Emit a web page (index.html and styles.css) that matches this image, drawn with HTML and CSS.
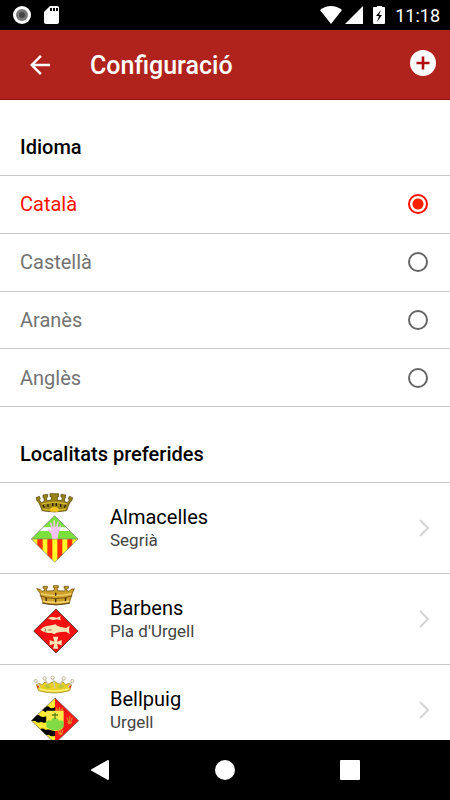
FILE: index.html
```html
<!DOCTYPE html>
<html lang="ca">
<head>
    <meta charset="UTF-8">
    <meta name="viewport" content="width=device-width, initial-scale=1.0">
    <title>Configuració</title>
    <link rel="stylesheet" href="styles.css">
</head>
<body>
    <div class="status-bar">
        <svg width="20" height="20" viewBox="0 0 20 20">
            <circle cx="10" cy="10" r="9" fill="#fff"/>
            <circle cx="10" cy="10" r="6" fill="#777"/>
            <circle cx="10" cy="10" r="3" fill="#444"/>
        </svg>
        <svg width="20" height="20" viewBox="0 0 20 20">
            <path fill="#fff" d="M8 1h7q2 0 2 2v14q0 2-2 2H4q-2 0-2-2V7z"/>
            <path fill="#000" d="M8 3h2v3H8zM11 3h2v3h-2zM14 3h2v3h-2z"/>
        </svg>
        <div class="status-right">
            <svg width="22" height="20" viewBox="0 0 22 20">
                <path fill="#fff" d="M11 19 0 5Q5 1 11 1t11 4z"/>
            </svg>
            <svg width="19" height="20" viewBox="0 0 19 20">
                <path fill="#fff" d="M19 1v18H1z"/>
            </svg>
            <svg class="battery" width="12" height="20" viewBox="0 0 12 20">
                <path fill="#fff" d="M0 3q0-1 1-1h3V1h5v1h2q1 0 1 1v15q0 1-1 1H1q-1 0-1-1z"/>
                <path fill="#000" d="M8 5 3 11h3l-2 6 5-7H6z"/>
            </svg>
            <span class="time">11:18</span>
        </div>
    </div>

    <header class="app-bar">
        <button type="button" class="icon-btn" aria-label="Enrere">
            <svg width="30" height="30" viewBox="0 0 24 24">
                <path fill="#fff" d="M20 11H7.83l5.59-5.59L12 4l-8 8 8 8 1.41-1.41L7.83 13H20z"/>
            </svg>
        </button>
        <h1>Configuració</h1>
        <button type="button" class="icon-btn add-btn" aria-label="Afegeix">
            <svg width="26" height="26" viewBox="0 0 26 26">
                <circle cx="13" cy="13" r="13" fill="#fff"/>
                <path stroke="#b00d0d" stroke-width="2.6" d="M13 6.5v13M6.5 13h13"/>
            </svg>
        </button>
    </header>

    <main>
        <h2 id="idioma">Idioma</h2>
        <div class="options" role="radiogroup" aria-labelledby="idioma">
            <label class="option">Català<input type="radio" name="lang" checked></label>
            <label class="option">Castellà<input type="radio" name="lang"></label>
            <label class="option">Aranès<input type="radio" name="lang"></label>
            <label class="option">Anglès<input type="radio" name="lang"></label>
        </div>

        <h2>Localitats preferides</h2>
        <a class="town" href="#almacelles">
            <svg class="crest" viewBox="0 2 210 255">
                <path fill="#9a8418" stroke="#4a3d05" stroke-width="2" d="M48 37L58 33L61 41L58 44L64 52L73 48L72 38L69 37V29L83 27V35L79 37L81 46L94 44V34H90V25H116V34H112V44L125 46L127 37L123 35V27L137 29V37L134 38L133 48L142 52L148 44L145 41L148 33L158 37L155 47L151 49L145 62L140 76Q103 84 66 76L61 62L55 49L51 47z"/>
                <path fill="none" stroke="#d5b92c" stroke-width="4" d="M66 56q37-10 74 0M68 71q35 8 70 0"/>
                <path fill="#f5c51c" d="M91 68l12-4 12 4v11H91z"/>
                <path stroke="#2c2400" stroke-width="4" d="M69 58l4 9M84 56v9M98 53v9M109 53v9M122 56v9M137 58l-4 9"/>
                <path fill="#7be03c" d="M104 91l70 70H34z"/>
                <path fill="#fff" d="M70 126h68l11 11H59z"/>
                <path fill="#ffff2a" d="M34 161h140l-70 70z"/>
                <path fill="#ff3000" d="M52 161h16v34l-16-16zM82 161h15v63l-15-15zM112 161h15v47l-15 15zM142 161h15v17l-15 15z"/>
                <path fill="none" stroke="#777" stroke-width="2" d="M104 91l70 70-70 70-70-70zM34 161h140"/>
                <path fill="#f5c3f3" d="M96 160l-2-14-11-13q-1-5 4-2l8 6-5-23q1-5 4-2l6 19V106q2-4 5 0l1 25 6-22q4-3 4 1l-3 24 6-12q4-3 4 1l-7 20-4 17z"/>
            </svg>
            <span class="town-text">
                <span class="town-name">Almacelles</span>
                <span class="town-area">Segrià</span>
            </span>
            <svg class="chevron" viewBox="0 0 12 18"><path d="M2 1l8 8-8 8"/></svg>
        </a>
        <a class="town" href="#barbens">
            <svg class="crest" viewBox="0 4 210 255">
                <path fill="#d0a02c" stroke="#5b3c00" stroke-width="2" d="M50 39l10 2 6 6 9-3-2-6h-4v-6h13v6h-4l2 8 22-1 2-9h-4v-6h15v6h-4l2 9 21 1 2-8h-4v-6h13v6h-4l-2 6 8 3 6-6 10-2-6 13-9 30q-39 11-79 0l-9-30z"/>
                <path fill="none" stroke="#efd46c" stroke-width="4" d="M62 54q46 12 92 0M68 76q40 9 80 0"/>
                <path fill="none" stroke="#4d3200" stroke-width="2" d="M59 61q49 15 98 0M66 83q42 9 84 0"/>
                <path fill="none" stroke="#3d2600" stroke-width="4" d="M107 51v9M107 70v10M78 66l1 10M137 66l-1 10"/>
                <path fill="#f80f12" stroke="#222" stroke-width="2" d="M108 100l66 66-66 66-67-66z"/>
                <path fill="#f5e6b7" d="M84 128q10-7 26-2l13-4-3 6 3 6-13-3q-14 5-26-3z"/>
                <path fill="#f5e6b7" d="M61 162q12-12 34-13l12-3 5 5q15 5 26 6l11-7-2 12 2 13-11-7q-18 0-28 3l-8 5-7-4q-22 0-34-10z"/>
                <path fill="none" stroke="#7a3020" stroke-width="2" d="M75 158q4 5 0 10M85 163h10"/>
                <path fill="#f5e6b7" d="M99 183h16l-4 15 14-5v16l-14-5 4 15H99l4-15-14 5v-16l14 5z"/>
            </svg>
            <span class="town-text">
                <span class="town-name">Barbens</span>
                <span class="town-area">Pla d'Urgell</span>
            </span>
            <svg class="chevron" viewBox="0 0 12 18"><path d="M2 1l8 8-8 8"/></svg>
        </a>
        <a class="town" href="#bellpuig">
            <svg class="crest" viewBox="0 7 210 255">
                <path fill="#e8cf22" stroke="#98862a" stroke-width="2" d="M49 57l8-4 10 4 8-8 12 6 15-9 15 9 12-6 8 8 10-4 8 4-6 18q-46 14-94 0z"/>
                <path fill="#b9c63a" d="M72 60l12-4 8 10-10 3zM112 66l10-10 12 4-9 8z"/>
                <path fill="none" stroke="#fff37c" stroke-width="5" d="M58 70q44 12 88 0"/>
                <path fill="none" stroke="#cfc9b8" stroke-width="4" d="M50 49l11 17M76 42l8 14M99 40l6 28M129 42l-8 14M155 49l-11 17"/>
                <g fill="#f5f1dc" stroke="#a9a48f" stroke-width="2">
                    <circle cx="47" cy="46" r="5"/>
                    <circle cx="74" cy="38" r="5"/>
                    <circle cx="98" cy="36" r="5"/>
                    <circle cx="131" cy="38" r="5"/>
                    <circle cx="157" cy="46" r="5"/>
                </g>
                <path fill="#e22" d="M51 60h5v6h-5zM148 60h5v6h-5z"/>
                <path fill="#ffec32" d="M105 97v136l-71-68z"/>
                <path fill="#ff1717" d="M105 97l71 68-71 68z"/>
                <path fill="#000" d="M78 123q7-3 10 2 8 6 17-1v15q-9 5-17-1-10 5-17-2l-5-2zM48 150q8-5 13 2 10 4 19-1v18q-8 5-17-1-10 6-17-2l-12-1zM60 190q10-4 17 3 13-6 28 3v14q-12 5-18-3l-9 1z"/>
                <path fill="#ffe94a" d="M79 135h52v32l-4 24q-21 10-42 0l-6-24z"/>
                <path fill="#81db45" d="M79 169q7-8 14-3 2-10 12-9 10-1 12 9 8-5 14 3v16q-26 18-52 0z"/>
                <path fill="none" stroke="#58851b" stroke-width="4" d="M105 141v19M96 148h18"/>
                <path fill="none" stroke="#d99a28" stroke-width="3" d="M110 126v7M118 124v9M126 126v7M107 133h22M141 155l5 14M149 151v19M157 155l-5 14M142 170h14M144 174h10M114 193l5 13M121 189v19M129 193l-5 13M115 205h13"/>
                <path fill="none" stroke="#555" stroke-width="2" d="M105 97l71 68-71 68-71-68z"/>
            </svg>
            <span class="town-text">
                <span class="town-name">Bellpuig</span>
                <span class="town-area">Urgell</span>
            </span>
            <svg class="chevron" viewBox="0 0 12 18"><path d="M2 1l8 8-8 8"/></svg>
        </a>
    </main>

    <nav class="nav-bar">
        <button type="button" class="icon-btn" aria-label="Torna">
            <svg width="20" height="20" viewBox="0 0 20 20"><path fill="#fff" stroke="#fff" stroke-width="2" stroke-linejoin="round" d="M18 1v18L2 10z"/></svg>
        </button>
        <button type="button" class="icon-btn" aria-label="Inici">
            <svg width="20" height="20" viewBox="0 0 20 20"><circle cx="10" cy="10" r="10" fill="#fff"/></svg>
        </button>
        <button type="button" class="icon-btn" aria-label="Recents">
            <svg width="20" height="20" viewBox="0 0 20 20"><rect width="20" height="20" rx="1" fill="#fff"/></svg>
        </button>
    </nav>
</body>
</html>
```
FILE: styles.css
```css
* {
    box-sizing: border-box;
}
body {
    margin: 0;
    height: 100vh;
    display: flex;
    flex-direction: column;
    font-family: Roboto, sans-serif;
    font-size: 20px;
    background: #fff;
    color: #000;
}
svg {
    display: block;
    flex-shrink: 0;
}
.status-bar {
    flex: 0 0 30px;
    display: flex;
    align-items: center;
    gap: 10px;
    padding: 0 10px 0 12px;
    background: #000;
    color: #fff;
}
.status-right {
    margin-left: auto;
    display: flex;
    align-items: center;
    gap: 2px;
}
.battery {
    margin: 0 8px;
}
.time {
    font-size: 18px;
}
.app-bar {
    flex: 0 0 70px;
    display: flex;
    align-items: center;
    padding: 0 14px 0 25px;
    background: #b0231d;
    box-shadow: inset 0 -1px #960e0a;
    color: #fff;
}
.app-bar h1 {
    flex: 1;
    margin: 0 0 0 35px;
    font-size: 25px;
    font-weight: 500;
}
.icon-btn {
    padding: 0;
    border: none;
    background: none;
    cursor: pointer;
}
.add-btn {
    padding-bottom: 4px;
}
main {
    flex: 1;
    min-height: 0;
    overflow-y: auto;
    scrollbar-width: none;
}
h2 {
    margin: 0;
    height: 76px;
    padding: 35px 20px 0;
    border-bottom: 1px solid #c8c8c8;
    font-size: 20px;
    font-weight: 500;
    line-height: 24px;
}
.options {
    display: grid;
    grid-template-rows: repeat(4, 1fr);
    height: 231px;
}
.option {
    display: flex;
    align-items: center;
    justify-content: space-between;
    padding: 0 22px 0 20px;
    border-bottom: 1px solid #c8c8c8;
    color: #737373;
    cursor: pointer;
}
.option:has(input:checked) {
    color: #ff0f00;
}
.option input {
    appearance: none;
    width: 20px;
    height: 20px;
    margin: 0;
    border: 2px solid #666;
    border-radius: 50%;
}
.option input:checked {
    border-color: #ff0f00;
    background: radial-gradient(circle, #ff2000 5px, #fff 6px);
}
.town {
    display: flex;
    align-items: center;
    height: 91px;
    padding: 0 20px;
    border-bottom: 1px solid #c8c8c8;
    color: #000;
    text-decoration: none;
}
.crest {
    width: 70px;
    height: 85px;
}
.town-text {
    flex: 1;
    margin-left: 20px;
    padding-top: 2px;
    line-height: 23px;
}
.town-name,
.town-area {
    display: block;
}
.town-area {
    font-size: 17px;
    color: #444;
}
.chevron {
    width: 12px;
    height: 18px;
    fill: none;
    stroke: #d4d4d4;
    stroke-width: 2;
}
.nav-bar {
    flex: 0 0 60px;
    display: flex;
    align-items: center;
    justify-content: center;
    gap: 105px;
    background: #000;
}
```
